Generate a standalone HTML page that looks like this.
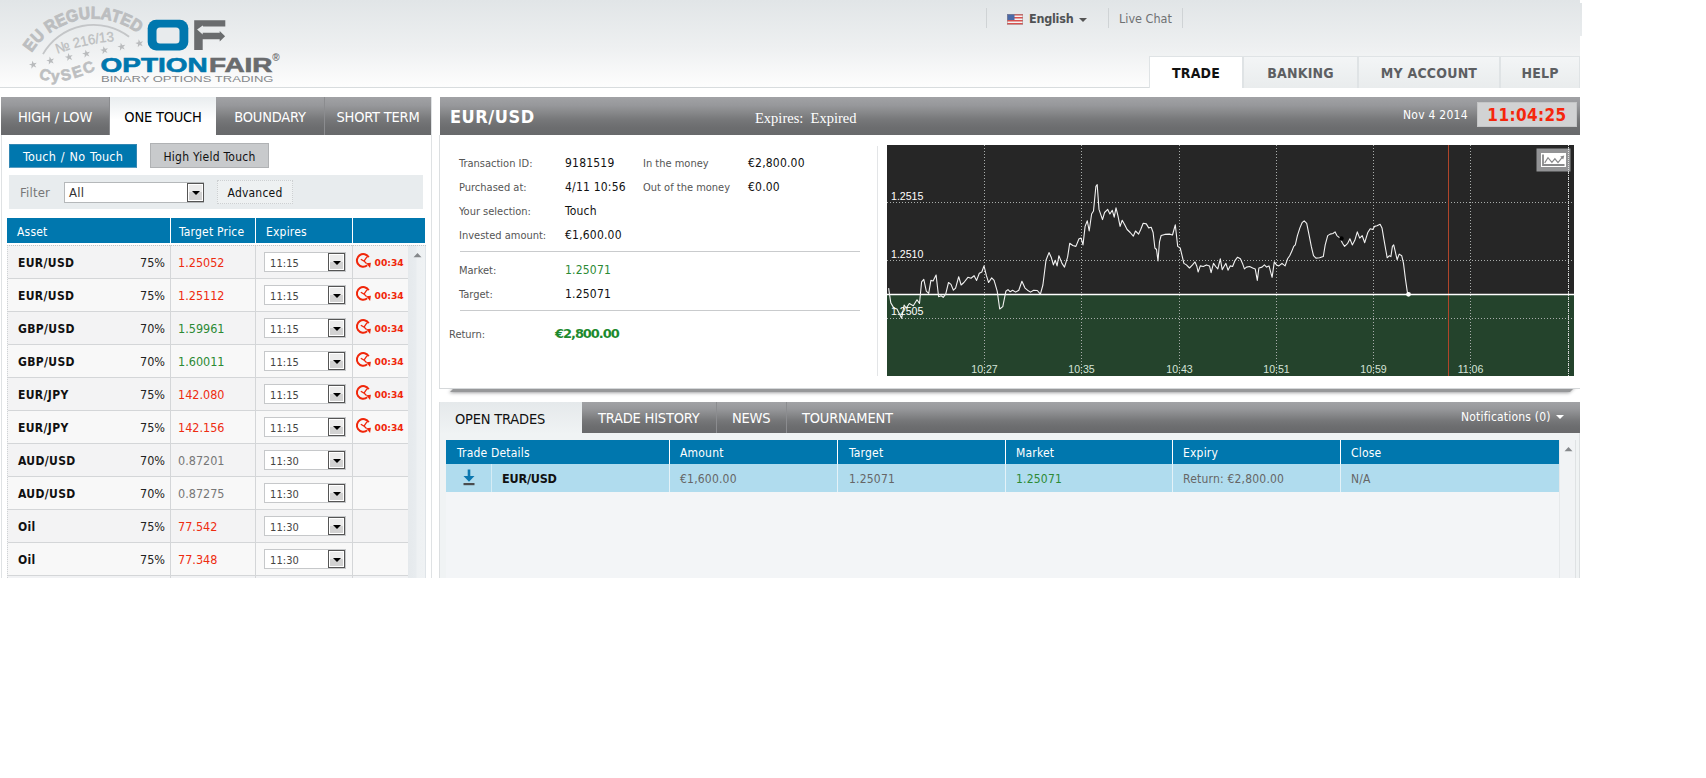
<!DOCTYPE html>
<html><head><meta charset="utf-8"><title>OptionFair</title>
<style>
*{box-sizing:border-box;margin:0;padding:0}
html,body{width:1706px;height:778px;background:#fff;overflow:hidden}
body{font-family:"DejaVu Sans Condensed","Liberation Sans",sans-serif;font-size:12px;color:#222;position:relative;letter-spacing:0.2px}
.abs{position:absolute}
#hdr{position:absolute;left:0;top:0;width:1580px;height:88px;background:linear-gradient(#e1e5e7,#eef0f1 55%,#fdfdfd);border-bottom:1px solid #d8dcde}
.dk{background:linear-gradient(#a1a2a5 0%,#97989b 22%,#868789 42%,#767779 60%,#6c6d6f 80%,#68696b 100%)}
.tab{position:absolute;top:97px;height:38px;line-height:40px;text-align:center;color:#fff;font-size:14.5px;border-right:1px solid #8b8c8f;letter-spacing:-0.2px}
.tab.on{background:linear-gradient(#e9edef,#fff 60%);color:#000;border:0}
.row{position:absolute;left:8px;width:400px;height:33px;border-bottom:1px solid #d4d6d8;background:#f3f3f4;line-height:33px}
.row:nth-child(even){background:#f8f8f8}
.row span{position:absolute;top:0}
.as{left:10px;top:1px!important;font-weight:bold;font-size:12px;color:#111;letter-spacing:0.35px}
.pc{left:132px;font-size:12.5px;color:#222;letter-spacing:0}
.tp{left:170px;font-size:12.5px;letter-spacing:0}
.r{color:#ee2c10}.g{color:#2c8a34}.n{color:#777}
.sel{left:256px;top:6px!important;width:82px;height:20px;background:#fff;border:1px solid #c6c8ca;line-height:18px}
.sv{left:5px;top:2px!important;font-size:11px;color:#444;letter-spacing:0.1px}
.sb{right:0;top:0;width:17px;height:18px;background:linear-gradient(#ececec 50%,#d2d2d2 50%);border:1px solid #555;box-shadow:inset 0 0 0 1px #fff}
.sb i{position:absolute;left:3.5px;top:7px;border:4px solid transparent;border-top:4px solid #000;border-bottom:0}
.clk{position:absolute;left:347px;top:6px;width:17px;height:17px}
.tm{left:366.5px;top:-0.5px!important;color:#f0260a;font-size:9.2px;font-weight:bold;letter-spacing:0;font-family:"DejaVu Sans",sans-serif}
.vline{position:absolute;width:1px;background:#d4d6d8}
.th{position:absolute;color:#fff;font-size:12px;top:2px;line-height:25px}
.lb{position:absolute;font-size:11px;color:#555;letter-spacing:0}
.vl{position:absolute;font-size:12px;color:#111}
.nav{position:absolute;top:56px;height:32px;line-height:33px;text-align:center;font-weight:bold;font-size:14px;color:#5d5f62;background:linear-gradient(#f3f5f6,#e9eced);border:1px solid #dfe3e5;border-bottom:0}
.nav.on{background:#fff;color:#111}
.sep{position:absolute;width:1px;background:#cfd3d5}
</style></head><body>
<div id="hdr"></div><div class="abs" style="left:1580px;top:3px;width:2px;height:33px;background:linear-gradient(#e1e5e7,#e9ecee)"></div>
<!-- logo -->
<svg class="abs" style="left:0;top:0" width="300" height="90" viewBox="0 0 300 90"><defs><path id="star" d="M0 -4.2L1 -1.3L4 -1.3L1.6 0.5L2.5 3.4L0 1.6L-2.5 3.4L-1.6 0.5L-4 -1.3L-1 -1.3Z" transform="rotate(-12)"/></defs>
<defs><path id="arc1" d="M30.8 54.1 A 73.4 73.4 0 0 1 135.5 31.8"/><path id="arc2" d="M38.5 77.5 Q 58 88 97 69.5"/><path id="arc3" d="M57.3 53.8 Q 85 43.5 114.5 41.2"/></defs>
<text font-family="Liberation Sans,sans-serif" font-weight="bold" font-size="17" fill="#bcbec0" stroke="#bcbec0" stroke-width="0.9" letter-spacing="0"><textPath href="#arc1" startOffset="1.7" textLength="121" lengthAdjust="spacingAndGlyphs">EU REGULATED</textPath></text>
<path d="M43 54.1 A 58.5 58.5 0 0 1 129.1 36.8" fill="none" stroke="#c4c6c8" stroke-width="1.8"/>
<text font-family="Liberation Sans,sans-serif" font-size="14" fill="#bdbfc1" stroke="#bdbfc1" stroke-width="0.35" letter-spacing="0"><textPath href="#arc3" textLength="58.5" lengthAdjust="spacingAndGlyphs">№ 216/13</textPath></text>
<text font-family="Liberation Sans,sans-serif" font-weight="bold" font-size="15.5" fill="#bdbfc1" stroke="#bdbfc1" stroke-width="0.6" letter-spacing="0"><textPath href="#arc2" textLength="60" lengthAdjust="spacing">CySEC</textPath></text>
<g fill="#b9bbbd"><use href="#star" x="33.1" y="64.8"/><use href="#star" x="50.5" y="60.7"/><use href="#star" x="69" y="57.2"/><use href="#star" x="86.3" y="53.8"/><use href="#star" x="104.3" y="50.3"/><use href="#star" x="121.6" y="46.8"/><use href="#star" x="139.5" y="43.4"/></g>
<rect x="147.7" y="19.8" width="40.6" height="30.8" rx="8.5" fill="#0077ae"/><rect x="156.5" y="27.5" width="23" height="16" rx="3.5" fill="#e8ebed"/>
<path d="M194.2 20.3L225.3 20.3L225.3 26.4L203.2 26.4L202.7 25.6L197.1 29.6L202.7 34.4L202.7 32.8L219.7 32.8L219.7 31.1L225.1 36.2L219.7 41.4L219.7 39.3L202.7 39.3L202.7 50.1L194.2 50.1Z" fill="#6a6c6e"/>
<text x="100.6" y="72.2" font-family="Liberation Sans,sans-serif" font-weight="bold" font-size="19.3" fill="#0077ae" stroke="#0077ae" stroke-width="0.6" letter-spacing="0" textLength="107" lengthAdjust="spacingAndGlyphs">OPTION</text>
<text x="209" y="72.2" font-family="Liberation Sans,sans-serif" font-weight="bold" font-size="19.3" fill="#6a6c6e" stroke="#6a6c6e" stroke-width="0.6" letter-spacing="0" textLength="63.5" lengthAdjust="spacingAndGlyphs">FAIR</text>
<text x="272.3" y="60.6" font-family="Liberation Sans,sans-serif" font-weight="bold" font-size="10" fill="#6a6c6e" letter-spacing="0">®</text>
<text x="101" y="82" font-family="Liberation Sans,sans-serif" font-size="9" fill="#85878a" letter-spacing="0" textLength="172.5" lengthAdjust="spacingAndGlyphs">BINARY OPTIONS TRADING</text>
</svg>
<!-- top right -->
<div class="sep" style="left:986px;top:8px;height:20px"></div>
<div class="sep" style="left:1108px;top:8px;height:20px"></div>
<div class="sep" style="left:1182px;top:8px;height:20px"></div>
<svg class="abs" style="left:1007px;top:14px" width="16" height="11" viewBox="0 0 16 11"><rect width="16" height="11" fill="#f3f3f3"/><g fill="#d9514f"><rect y="0" width="16" height="1.5"/><rect y="3" width="16" height="1.5"/><rect y="6" width="16" height="1.5"/><rect y="9" width="16" height="1.5"/></g><rect width="7.5" height="6" fill="#4a6aa8"/><rect x="0.5" y="0.5" width="15" height="10" fill="none" stroke="#9a8a8a" stroke-opacity="0.5"/></svg>
<div class="abs" style="left:1029px;top:11px;font-weight:bold;font-size:12.5px;color:#505254;letter-spacing:-0.25px">English</div>
<div class="abs" style="left:1079px;top:18px;border:4px solid transparent;border-top:4px solid #555;border-bottom:0"></div>
<div class="abs" style="left:1119px;top:11px;font-size:12.5px;color:#6f7173;letter-spacing:0">Live Chat</div>
<div class="nav on" style="left:1149px;width:94px">TRADE</div>
<div class="nav" style="left:1243px;width:115px">BANKING</div>
<div class="nav" style="left:1358px;width:142px">MY ACCOUNT</div>
<div class="nav" style="left:1500px;width:80px">HELP</div>

<!-- left panel -->
<div class="abs" style="left:1px;top:97px;width:431px;height:481px;border-left:1px solid #dfe2e4;border-right:1px solid #dfe2e4;background:#fff"></div>
<div class="tab dk" style="left:1px;width:109px">HIGH / LOW</div>
<div class="tab on" style="left:110px;width:106px">ONE TOUCH</div>
<div class="tab dk" style="left:216px;width:109px">BOUNDARY</div>
<div class="tab dk" style="left:325px;width:106px;border-right:0">SHORT TERM</div>
<div class="abs" style="left:9px;top:144px;width:128px;height:24px;background:#0077ae;border:1px solid #3387b3;border-bottom-color:#5a9dc0;color:#fff;text-align:center;line-height:23px;font-size:12.5px;word-spacing:1px;letter-spacing:0.2px">Touch / No Touch</div>
<div class="abs" style="left:150px;top:143px;width:119px;height:25px;background:#c8cacc;border:1px solid #b0b2b4;color:#111;text-align:center;line-height:26px;font-size:12px;letter-spacing:0.25px">High Yield Touch</div>
<div class="abs" style="left:9px;top:175px;width:414px;height:34px;background:#e8ecee"></div>
<div class="abs" style="left:20px;top:185px;font-size:13px;color:#777">Filter</div>
<div class="abs" style="left:64px;top:182px;width:140px;height:21px;background:#fff;border:1px solid #b5b8ba"></div>
<div class="abs" style="left:69px;top:185px;font-size:13px;color:#333">All</div>
<div class="abs sb" style="left:187px;top:183px;width:17px;height:19px"><i></i></div>
<div class="abs" style="left:217px;top:180px;width:76px;height:24px;background:#eef1f2;border:1px dotted #cdd0d2;text-align:center;line-height:24px;font-size:12px;color:#111">Advanced</div>
<div class="abs" style="left:7px;top:218px;width:418px;height:25px;background:#0077ae">
 <span class="th" style="left:10px">Asset</span><span class="th" style="left:172px">Target Price</span><span class="th" style="left:259px">Expires</span>
 <i class="abs" style="left:163px;top:0;width:1px;height:25px;background:#fff"></i><i class="abs" style="left:248px;top:0;width:1px;height:25px;background:#fff"></i><i class="abs" style="left:345px;top:0;width:1px;height:25px;background:#fff"></i>
</div>
<div class="abs" style="left:7px;top:245px;width:418px;height:333px;background:#f1f2f4;border-left:1px dotted #cfd2d4"></div>
<div class="abs" style="left:7px;top:245px;width:419px;height:0;border-top:1px dotted #c2c5c7;z-index:3"></div>
<div class="abs" style="left:408px;top:245px;width:18px;height:333px;background:linear-gradient(90deg,#e5e9ec 0,#e8ecef 45%,#eef1f3 55%,#eff2f4 100%);border-right:1px solid #dfe4e8"></div>
<svg class="abs" style="left:413px;top:252px" width="9" height="6" viewBox="0 0 9 6"><path d="M0.5 5.2L4.5 1L8.5 5.2Z" fill="#85888b"/></svg>
<div>
<div class="row" style="top:246px"><span class="as">EUR/USD</span><span class="pc">75%</span><span class="tp r">1.25052</span><span class="sel"><span class="sv">11:15</span><span class="sb"><i></i></span></span><svg class="clk" viewBox="0 0 17 17"><path d="M13.7 5.3A6.3 6.3 0 1 0 12.2 13.3" fill="none" stroke="#f0260a" stroke-width="2"/><path d="M5.8 7.2L9 9.1L11.9 4.9M9 9.1L11.5 11.4" fill="none" stroke="#f0260a" stroke-width="1.3"/><path d="M11.2 11.2L15.9 10.8L15.1 15.9Z" fill="#f0260a"/></svg><span class="tm">00:34</span></div>
<div class="row" style="top:279px"><span class="as">EUR/USD</span><span class="pc">75%</span><span class="tp r">1.25112</span><span class="sel"><span class="sv">11:15</span><span class="sb"><i></i></span></span><svg class="clk" viewBox="0 0 17 17"><path d="M13.7 5.3A6.3 6.3 0 1 0 12.2 13.3" fill="none" stroke="#f0260a" stroke-width="2"/><path d="M5.8 7.2L9 9.1L11.9 4.9M9 9.1L11.5 11.4" fill="none" stroke="#f0260a" stroke-width="1.3"/><path d="M11.2 11.2L15.9 10.8L15.1 15.9Z" fill="#f0260a"/></svg><span class="tm">00:34</span></div>
<div class="row" style="top:312px"><span class="as">GBP/USD</span><span class="pc">70%</span><span class="tp g">1.59961</span><span class="sel"><span class="sv">11:15</span><span class="sb"><i></i></span></span><svg class="clk" viewBox="0 0 17 17"><path d="M13.7 5.3A6.3 6.3 0 1 0 12.2 13.3" fill="none" stroke="#f0260a" stroke-width="2"/><path d="M5.8 7.2L9 9.1L11.9 4.9M9 9.1L11.5 11.4" fill="none" stroke="#f0260a" stroke-width="1.3"/><path d="M11.2 11.2L15.9 10.8L15.1 15.9Z" fill="#f0260a"/></svg><span class="tm">00:34</span></div>
<div class="row" style="top:345px"><span class="as">GBP/USD</span><span class="pc">70%</span><span class="tp g">1.60011</span><span class="sel"><span class="sv">11:15</span><span class="sb"><i></i></span></span><svg class="clk" viewBox="0 0 17 17"><path d="M13.7 5.3A6.3 6.3 0 1 0 12.2 13.3" fill="none" stroke="#f0260a" stroke-width="2"/><path d="M5.8 7.2L9 9.1L11.9 4.9M9 9.1L11.5 11.4" fill="none" stroke="#f0260a" stroke-width="1.3"/><path d="M11.2 11.2L15.9 10.8L15.1 15.9Z" fill="#f0260a"/></svg><span class="tm">00:34</span></div>
<div class="row" style="top:378px"><span class="as">EUR/JPY</span><span class="pc">75%</span><span class="tp r">142.080</span><span class="sel"><span class="sv">11:15</span><span class="sb"><i></i></span></span><svg class="clk" viewBox="0 0 17 17"><path d="M13.7 5.3A6.3 6.3 0 1 0 12.2 13.3" fill="none" stroke="#f0260a" stroke-width="2"/><path d="M5.8 7.2L9 9.1L11.9 4.9M9 9.1L11.5 11.4" fill="none" stroke="#f0260a" stroke-width="1.3"/><path d="M11.2 11.2L15.9 10.8L15.1 15.9Z" fill="#f0260a"/></svg><span class="tm">00:34</span></div>
<div class="row" style="top:411px"><span class="as">EUR/JPY</span><span class="pc">75%</span><span class="tp r">142.156</span><span class="sel"><span class="sv">11:15</span><span class="sb"><i></i></span></span><svg class="clk" viewBox="0 0 17 17"><path d="M13.7 5.3A6.3 6.3 0 1 0 12.2 13.3" fill="none" stroke="#f0260a" stroke-width="2"/><path d="M5.8 7.2L9 9.1L11.9 4.9M9 9.1L11.5 11.4" fill="none" stroke="#f0260a" stroke-width="1.3"/><path d="M11.2 11.2L15.9 10.8L15.1 15.9Z" fill="#f0260a"/></svg><span class="tm">00:34</span></div>
<div class="row" style="top:444px"><span class="as">AUD/USD</span><span class="pc">70%</span><span class="tp n">0.87201</span><span class="sel"><span class="sv">11:30</span><span class="sb"><i></i></span></span></div>
<div class="row" style="top:477px"><span class="as">AUD/USD</span><span class="pc">70%</span><span class="tp n">0.87275</span><span class="sel"><span class="sv">11:30</span><span class="sb"><i></i></span></span></div>
<div class="row" style="top:510px"><span class="as">Oil</span><span class="pc">75%</span><span class="tp r">77.542</span><span class="sel"><span class="sv">11:30</span><span class="sb"><i></i></span></span></div>
<div class="row" style="top:543px"><span class="as">Oil</span><span class="pc">75%</span><span class="tp r">77.348</span><span class="sel"><span class="sv">11:30</span><span class="sb"><i></i></span></span></div>
</div>
<div class="vline" style="left:170px;top:245px;height:333px"></div>
<div class="vline" style="left:255px;top:245px;height:333px"></div>
<div class="vline" style="left:352px;top:245px;height:333px"></div>

<!-- main panel -->
<div class="abs" style="left:454px;top:384px;width:1120px;height:8px;background:#97989a;box-shadow:0 1px 3px 0 #a0a1a3;transform:skewX(-45deg)"></div>
<div class="abs" style="left:439px;top:135px;width:1141px;height:254px;background:#fff;border-left:1px solid #dcdfe1;border-bottom:1px solid #d5d8da"></div>
<div class="abs dk" style="left:440px;top:97px;width:1140px;height:38px"></div>
<div class="abs" style="left:450px;top:106px;font-size:18px;font-weight:bold;color:#fff;letter-spacing:0.55px">EUR/USD</div>
<div class="abs" style="left:755px;top:110px;font-size:14.5px;color:#fff;letter-spacing:0;font-family:'Liberation Serif',serif">Expires:&nbsp; Expired</div>
<div class="abs" style="left:1403px;top:108px;font-size:12px;color:#fff;letter-spacing:0.25px">Nov 4 2014</div>
<div class="abs" style="left:1477px;top:102px;width:100px;height:25px;background:#d1d2d3;border:1px solid #c4c5c6;color:#f5260c;font-weight:bold;font-size:17px;text-align:center;line-height:24px;letter-spacing:0.4px">11:04:25</div>

<div class="lb" style="left:459px;top:157px">Transaction ID:</div><div class="vl" style="left:565px;top:156px">9181519</div>
<div class="lb" style="left:459px;top:181px">Purchased at:</div><div class="vl" style="left:565px;top:180px">4/11 10:56</div>
<div class="lb" style="left:459px;top:205px">Your selection:</div><div class="vl" style="left:565px;top:204px">Touch</div>
<div class="lb" style="left:459px;top:229px">Invested amount:</div><div class="vl" style="left:565px;top:228px">€1,600.00</div>
<div class="lb" style="left:643px;top:157px">In the money</div><div class="vl" style="left:748px;top:156px">€2,800.00</div>
<div class="lb" style="left:643px;top:181px">Out of the money</div><div class="vl" style="left:748px;top:180px">€0.00</div>
<div class="abs" style="left:460px;top:251px;width:400px;height:1px;background:#c9cbcd"></div>
<div class="lb" style="left:459px;top:264px">Market:</div><div class="vl" style="left:565px;top:263px;color:#2c8a34">1.25071</div>
<div class="lb" style="left:459px;top:288px">Target:</div><div class="vl" style="left:565px;top:287px">1.25071</div>
<div class="abs" style="left:460px;top:310px;width:400px;height:1px;background:#c9cbcd"></div>
<div class="lb" style="left:449px;top:328px">Return:</div><div class="abs" style="left:555px;top:326px;font-size:13px;font-weight:bold;color:#1d8a2e;font-family:'DejaVu Sans',sans-serif;letter-spacing:-1.05px">€2,800.00</div>
<div class="abs" style="left:877px;top:146px;width:1px;height:230px;background:#e3e5e7"></div>

<!-- chart -->
<svg class="abs" style="left:887px;top:145px" width="687" height="231" viewBox="0 0 687 231">
<rect width="687" height="231" fill="#262626"/>
<rect y="149" width="687" height="82" fill="#24432c"/>
<g stroke="#a9adab" stroke-width="1" stroke-dasharray="1,2" shape-rendering="crispEdges">
<path d="M0 57.5H687M0 115.5H687M0 173.5H687"/>
<path d="M97.5 0V231M194.5 0V231M292.5 0V231M389.5 0V231M486.5 0V231M583.5 0V231M681.5 0V231"/>
</g>
<path d="M561.5 0V231" stroke="#b0452a" stroke-width="1" shape-rendering="crispEdges"/>
<path d="M0 149.5H687" stroke="#fff" stroke-width="1.4"/>
<polyline points="1.6,143.1 3.8,157.9 6.9,163.1 10.0,164.0 14.6,173.3 17.1,160.0 19.2,163.1 22.3,158.5 26.3,160.7 30.0,154.8 32.5,158.5 34.6,136.9 36.8,134.4 39.3,146.2 41.7,148.3 43.9,135.4 46.1,136.0 49.1,130.1 51.6,151.7 54.1,150.8 56.2,152.3 58.7,149.2 61.5,137.5 64.0,139.4 66.4,145.2 68.6,143.1 71.7,131.7 74.1,140.0 76.9,137.5 80.9,132.3 84.0,133.2 87.1,130.7 89.6,135.4 92.3,128.3 94.8,127.0 97.0,120.9 99.4,130.7 101.6,137.5 104.7,132.9 107.1,135.4 110.2,146.2 112.7,164.0 115.8,161.6 118.9,146.2 121.0,144.6 123.2,146.8 125.6,145.2 128.7,147.1 131.8,145.2 134.9,136.3 138.0,143.1 140.5,145.2 143.5,147.1 146.6,145.2 150.3,145.5 153.4,149.2 155.9,140.0 159.0,115.3 162.0,107.6 164.2,112.2 166.4,119.9 168.2,115.3 170.1,120.9 171.9,110.7 175.0,118.4 177.5,122.1 180.6,112.2 182.7,98.3 185.8,100.5 188.9,101.4 192.0,93.7 194.1,93.1 196.0,99.9 198.1,81.4 200.3,75.8 202.2,86.0 204.6,69.0 206.5,66.0 208.9,41.3 210.2,39.7 212.0,64.4 215.5,74.6 217.6,67.5 220.7,64.4 222.9,69.0 225.3,65.3 227.2,72.1 229.0,62.9 230.9,70.6 233.1,81.4 235.2,75.2 237.7,79.8 240.1,84.5 243.2,87.5 246.3,91.2 248.5,86.0 251.6,89.1 253.7,84.5 256.2,78.3 259.3,78.9 261.7,82.9 264.2,82.3 266.1,87.5 267.9,103.0 269.5,104.5 271.0,115.9 272.5,96.8 274.1,90.6 277.8,89.4 282.4,89.1 285.5,90.0 287.0,84.5 288.3,79.8 289.5,90.6 290.7,101.4 293.2,103.0 294.7,109.1 296.9,118.4 299.4,119.9 302.5,123.0 305.5,119.9 308.0,116.9 309.9,121.5 311.1,127.0 313.3,120.9 316.3,121.5 319.4,119.9 322.5,120.9 324.1,127.6 326.5,118.4 328.7,121.5 330.8,123.9 333.3,113.8 335.2,124.6 337.0,121.5 338.9,118.4 341.0,125.2 343.2,120.9 345.6,121.5 348.1,115.3 350.6,112.2 353.4,113.8 355.5,118.4 357.4,123.9 359.5,122.1 362.6,121.5 365.7,123.0 368.2,123.9 370.3,135.4 371.9,123.0 375.0,122.1 377.4,119.9 379.6,122.1 382.0,120.9 385.1,132.3 387.3,116.9 389.5,119.9 391.9,120.9 395.0,118.4 398.1,120.9 400.6,113.8 402.7,110.7 404.9,106.1 406.7,101.4 408.3,99.9 410.4,90.6 412.9,82.9 415.1,77.7 417.2,75.8 419.7,78.3 422.2,90.6 424.3,101.4 426.5,110.7 428.9,113.1 432.6,112.8 436.3,111.6 438.2,99.9 440.7,90.6 443.1,89.1 445.9,88.5 448.1,86.9 449.9,90.6 453.0,93.1 455.5,98.3 457.6,101.4 460.7,98.3 462.9,93.7 465.3,99.9 467.8,95.3 470.3,86.9 472.7,93.1 475.2,90.6 477.7,97.7 480.8,87.5 483.2,83.8 485.7,84.5 487.6,81.4 490.0,80.8 493.1,79.2 495.0,82.9 496.8,93.7 498.7,104.5 500.2,112.8 502.4,110.7 503.9,111.6 505.4,101.4 506.7,99.9 508.5,107.6 510.1,114.7 512.2,109.1 514.7,110.7 516.5,118.4 518.4,133.8 520.2,146.2 521.5,149.2" fill="none" stroke="#f2f2f2" stroke-width="1.1" stroke-linejoin="round"/>
<circle cx="454.5" cy="93.5" r="2.2" fill="#000"/>
<circle cx="521.5" cy="149.3" r="2.4" fill="#fff"/>
<g fill="#fff" font-family="Liberation Sans,sans-serif" font-size="10.6" letter-spacing="0"><text x="4" y="55">1.2515</text><text x="4" y="113">1.2510</text><text x="4" y="170">1.2505</text></g>
<g fill="#d5e3d8" font-family="Liberation Sans,sans-serif" font-size="10.6" letter-spacing="0" text-anchor="middle"><text x="97.5" y="228">10:27</text><text x="194.5" y="228">10:35</text><text x="292.5" y="228">10:43</text><text x="389.5" y="228">10:51</text><text x="486.5" y="228">10:59</text><text x="583.5" y="228">11:06</text></g>
<rect x="649.5" y="3.5" width="34" height="23" fill="#929395"/>
<rect x="654" y="8" width="25" height="14" fill="#fff"/>
<path d="M656 9.5V20H677.5" fill="none" stroke="#88898b" stroke-width="1.8"/>
<path d="M657.7 17.9L661 12.7L664.9 17.4L667.9 13.8L671 17.6L675.2 12.4" fill="none" stroke="#88898b" stroke-width="1.2"/>
<path d="M677.3 10.6L676.2 14.6L673.2 11.6Z" fill="#88898b"/>
<path d="M681.5 0V231" stroke="#e0e2e1" stroke-width="1" stroke-dasharray="1,1" shape-rendering="crispEdges"/>
</svg>

<!-- bottom panel -->
<div class="abs" style="left:439px;top:402px;width:1141px;height:176px;background:#f0f3f4;border-left:1px solid #dcdfe1;border-right:1px solid #dcdfe1"></div>
<div class="abs dk" style="left:582px;top:402px;width:998px;height:31px"></div>
<div class="abs" style="left:440px;top:402px;width:142px;height:32px;background:linear-gradient(#e5e9eb,#f0f3f4);font-size:14.5px;color:#111;line-height:34px;padding-left:15px;letter-spacing:-0.2px">OPEN TRADES</div>
<div class="abs" style="left:598px;top:402px;font-size:14.5px;color:#fff;line-height:32px;letter-spacing:-0.2px">TRADE HISTORY</div>
<div class="abs" style="left:732px;top:402px;font-size:14.5px;color:#fff;line-height:32px;letter-spacing:-0.2px">NEWS</div>
<div class="abs" style="left:802px;top:402px;font-size:14.5px;color:#fff;line-height:32px;letter-spacing:-0.2px">TOURNAMENT</div>
<div class="abs" style="left:716px;top:402px;width:1px;height:31px;background:#8b8c8f"></div>
<div class="abs" style="left:786px;top:402px;width:1px;height:31px;background:#8b8c8f"></div>
<div class="abs" style="left:1461px;top:410px;font-size:12px;color:#fff">Notifications (0)</div>
<div class="abs" style="left:1556px;top:415px;border:4px solid transparent;border-top:4px solid #fff;border-bottom:0"></div>
<div class="abs" style="left:446px;top:440px;width:1113px;height:138px;background:#f3f5f7"></div>
<div class="abs" style="left:446px;top:440px;width:1113px;height:24px;background:#0077ae">
 <span class="th" style="left:11px;line-height:24px;top:1px">Trade Details</span><span class="th" style="left:234px;line-height:24px;top:1px">Amount</span><span class="th" style="left:403px;line-height:24px;top:1px">Target</span><span class="th" style="left:570px;line-height:24px;top:1px">Market</span><span class="th" style="left:737px;line-height:24px;top:1px">Expiry</span><span class="th" style="left:905px;line-height:24px;top:1px">Close</span>
 <i class="abs" style="left:223px;top:0;width:1px;height:24px;background:#fff"></i><i class="abs" style="left:391px;top:0;width:1px;height:24px;background:#fff"></i><i class="abs" style="left:559px;top:0;width:1px;height:24px;background:#fff"></i><i class="abs" style="left:726px;top:0;width:1px;height:24px;background:#fff"></i><i class="abs" style="left:894px;top:0;width:1px;height:24px;background:#fff"></i>
</div>
<div class="abs" style="left:446px;top:464px;width:1113px;height:28px;background:#b0dcee;font-size:12px;line-height:30px;color:#666">
 <span class="abs" style="left:56px;font-weight:bold;color:#111;font-size:12.5px;letter-spacing:-0.2px">EUR/USD</span><span class="abs" style="left:234px">€1,600.00</span><span class="abs" style="left:403px">1.25071</span><span class="abs" style="left:570px;color:#2c8a34">1.25071</span><span class="abs" style="left:737px">Return: €2,800.00</span><span class="abs" style="left:905px">N/A</span>
 <i class="abs" style="left:45px;top:0;width:1px;height:28px;background:#d6ecf5"></i><i class="abs" style="left:223px;top:0;width:1px;height:28px;background:#e4f2f8"></i><i class="abs" style="left:391px;top:0;width:1px;height:28px;background:#e4f2f8"></i><i class="abs" style="left:559px;top:0;width:1px;height:28px;background:#e4f2f8"></i><i class="abs" style="left:726px;top:0;width:1px;height:28px;background:#e4f2f8"></i><i class="abs" style="left:894px;top:0;width:1px;height:28px;background:#e4f2f8"></i>
 <svg class="abs" style="left:16px;top:5px" width="14" height="18" viewBox="0 0 14 18"><path d="M5.7 0.5H8.3V7H12.5L7 12.8L1.5 7H5.7Z" fill="#0b78b0"/><rect x="1.5" y="14" width="11" height="2.2" fill="#4a4c4e"/></svg>
</div>
<div class="abs" style="left:1559px;top:440px;width:17px;height:138px;background:#f1f3f5;border-left:1px solid #e6e9eb;border-right:1px solid #dfe2e4"></div>
<svg class="abs" style="left:1564px;top:446px" width="9" height="6" viewBox="0 0 9 6"><path d="M0.5 5.2L4.5 1L8.5 5.2Z" fill="#85888b"/></svg>
</body></html>
